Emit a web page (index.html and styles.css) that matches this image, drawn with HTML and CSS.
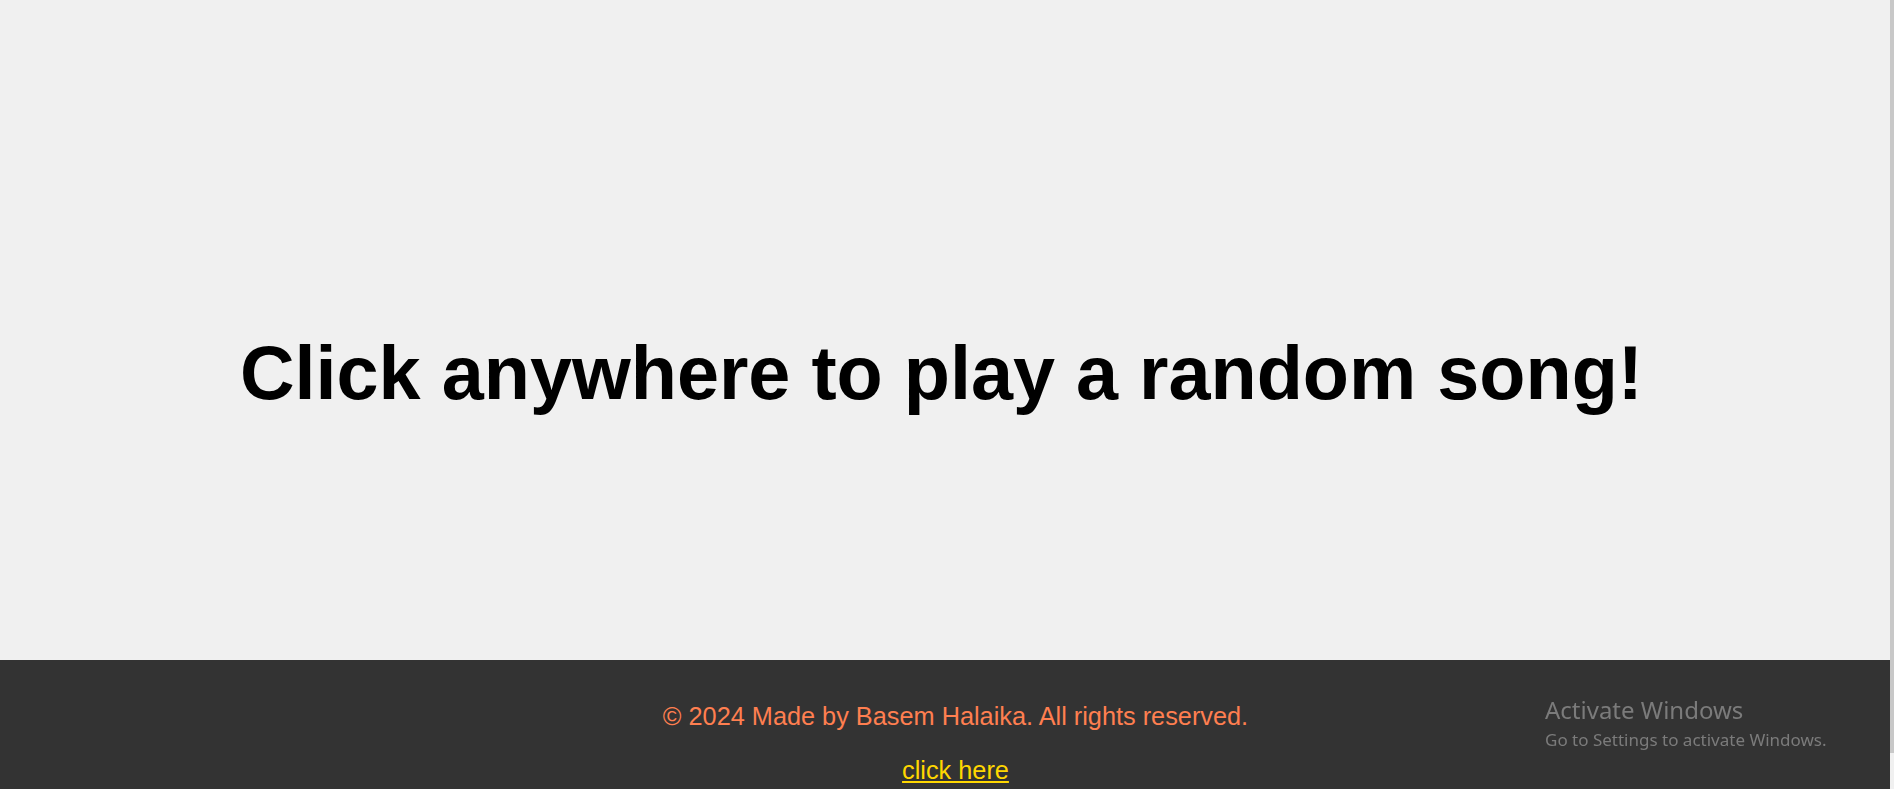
FILE: index.html
```html
<!DOCTYPE html>
<html lang="en">
<head>
<meta charset="utf-8">
<title>Random Song</title>
<link rel="stylesheet" href="styles.css">
</head>
<body>
<main class="stage">
  <h1 class="title">Click anywhere to play a random song!</h1>
</main>
<footer class="footer">
  <p class="copy">&copy; 2024 Made by Basem Halaika. All rights reserved.</p>
  <p class="link-row"><a class="link" href="#">click here</a></p>
</footer>
<div class="scrollbar"><div class="thumb"></div></div>
<div class="watermark">
  <div class="wm-title">Activate Windows</div>
  <div class="wm-sub">Go to Settings to activate Windows.</div>
</div>
</body>
</html>
```
FILE: styles.css
```css
html {
  overflow: hidden;
}
body {
  margin: 0;
  background: #f0f0f0;
  font-family: "Liberation Sans", Arial, sans-serif;
  width: 1890px;
}
.stage {
  height: 660px;
  box-sizing: border-box;
  display: flex;
  justify-content: center;
  align-items: center;
  padding-right: 7px;
  padding-top: 86px;
}
.title {
  margin: 0;
  font-size: 75.6px;
  font-weight: bold;
  color: #000;
  line-height: normal;
  white-space: nowrap;
}
.footer {
  background: #333333;
  height: 167px;
  box-sizing: border-box;
  padding: 42px 0 0 21px;
  text-align: center;
  font-size: 25.3px;
}
.copy {
  margin: 0 0 25px;
  color: #ff7f50;
}
.link-row {
  margin: 0;
}
.link {
  color: #ffd700;
  text-decoration: underline;
}
.scrollbar {
  position: fixed;
  top: 0;
  right: 0;
  width: 4px;
  height: 100%;
  background: #f0f0f0;
}
.thumb {
  height: 753px;
  background: #c8c8c8;
}
.watermark {
  position: fixed;
  left: 1545px;
  top: 694px;
  color: #7b7b7b;
  font-family: "Noto Sans", "Open Sans", sans-serif;
}
.wm-title {
  font-size: 24px;
  line-height: 32px;
}
.wm-sub {
  font-size: 17px;
  line-height: 27px;
}
```
